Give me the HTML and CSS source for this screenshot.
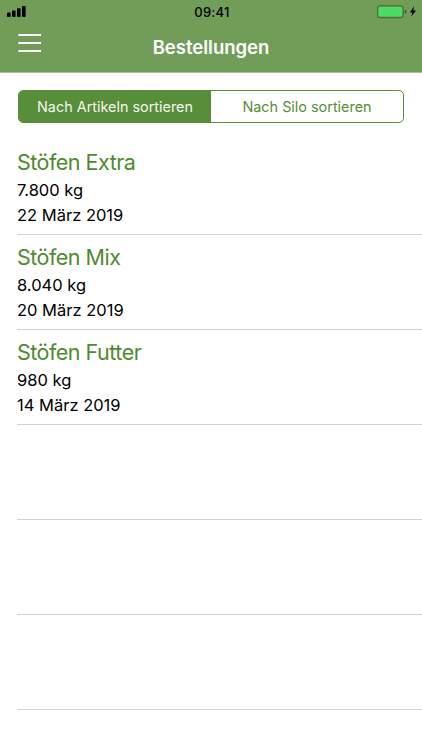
FILE: index.html
```html
<!DOCTYPE html>
<html lang="de">
<head>
  <meta charset="utf-8">
  <title>Bestellungen</title>
  <link rel="stylesheet" href="styles.css">
</head>
<body>

<header class="header">
  <div class="status">
    <svg class="signal" viewBox="0 0 20 12" width="20" height="12">
      <rect x="0" y="6.5" width="3.6" height="4.5" rx="1"/>
      <rect x="5" y="4.5" width="3.6" height="6.5" rx="1"/>
      <rect x="10" y="2.3" width="3.6" height="8.7" rx="1"/>
      <rect x="15" y="0" width="3.6" height="11" rx="1"/>
    </svg>
    <span class="time">09:41</span>
    <svg class="battery" viewBox="0 0 40 14" width="40" height="14">
      <rect x="0.6" y="0.8" width="25.6" height="11.8" rx="2.6" fill="none" stroke="#45722f" stroke-width="1.1"/>
      <rect x="1.6" y="1.9" width="23.4" height="9.6" rx="1.4" fill="#4bdc65"/>
      <path d="M27.8 4.6 Q29.4 5 29.4 6.7 Q29.4 8.4 27.8 8.8 Z" fill="#35572a"/>
      <path d="M37 1.3 L32.9 7.4 H35.4 L34.3 11.6 L39 5.6 H36.3 Z"/>
    </svg>
  </div>
  <div class="navbar">
    <svg class="menu" viewBox="0 0 24 20" width="24" height="20">
      <path d="M0.3 2H23M0.3 10H23M0.3 18H23" stroke="#fff" stroke-width="2"/>
    </svg>
    <h1 class="title">Bestellungen</h1>
  </div>
</header>

<div class="segments">
  <div class="segment selected">Nach Artikeln sortieren</div>
  <div class="segment">Nach Silo sortieren</div>
</div>

<ul class="orders">
  <li class="order">
    <h2 class="name">Stöfen Extra</h2>
    <p class="detail">7.800 kg</p>
    <p class="detail">22 März 2019</p>
  </li>
  <li class="order">
    <h2 class="name">Stöfen Mix</h2>
    <p class="detail">8.040 kg</p>
    <p class="detail">20 März 2019</p>
  </li>
  <li class="order">
    <h2 class="name">Stöfen Futter</h2>
    <p class="detail">980 kg</p>
    <p class="detail">14 März 2019</p>
  </li>
  <li class="order"></li>
  <li class="order"></li>
  <li class="order"></li>
</ul>

</body>
</html>
```
FILE: styles.css
```css
* {
    box-sizing: border-box;
}

body {
    margin: 0;
    height: 750px;
    overflow: hidden;
    background: #fff;
    color: #000;
    font-family: Inter, "Liberation Sans", sans-serif;
}

.header {
    height: 73px;
    background: #719d59;
    border-bottom: 1px solid #a5bd98;
}

.status {
    display: grid;
    grid-template-columns: 1fr auto 1fr;
    height: 24px;
    padding: 5px 5px 0 7px;
}

.signal {
    margin-top: 1px;
}

.time {
    font-size: 13px;
    font-weight: 500;
    line-height: 14px;
    letter-spacing: 0.3px;
}

.battery {
    justify-self: end;
}

.navbar {
    display: grid;
    grid-template-columns: 24px 1fr 24px;
    padding: 9px 18px 0;
}

.title {
    margin: 2px 0 0;
    color: #fff;
    font-size: 18.5px;
    font-weight: 600;
    line-height: 24px;
    text-align: center;
}

.segments {
    display: flex;
    height: 33px;
    margin: 17px 18px 0;
    border: 1px solid #588d39;
    border-radius: 5px;
    overflow: hidden;
}

.segment {
    flex: 1;
    color: #588d39;
    font-size: 14.4px;
    line-height: 31px;
    text-align: center;
    white-space: nowrap;
}

.selected {
    background: #588d39;
    color: #f2f8ee;
}

.orders {
    margin: 17px 0 0;
    padding: 0 0 0 17px;
    list-style: none;
}

.order {
    height: 95px;
    padding-top: 8px;
    border-bottom: 1px solid #d3d3d5;
}

.name {
    margin: 0 0 2px;
    color: #4f8a31;
    font-size: 21.5px;
    font-weight: 400;
    line-height: 28px;
    letter-spacing: -0.5px;
}

.detail {
    margin: 0;
    font-size: 16.5px;
    line-height: 25px;
}
```
